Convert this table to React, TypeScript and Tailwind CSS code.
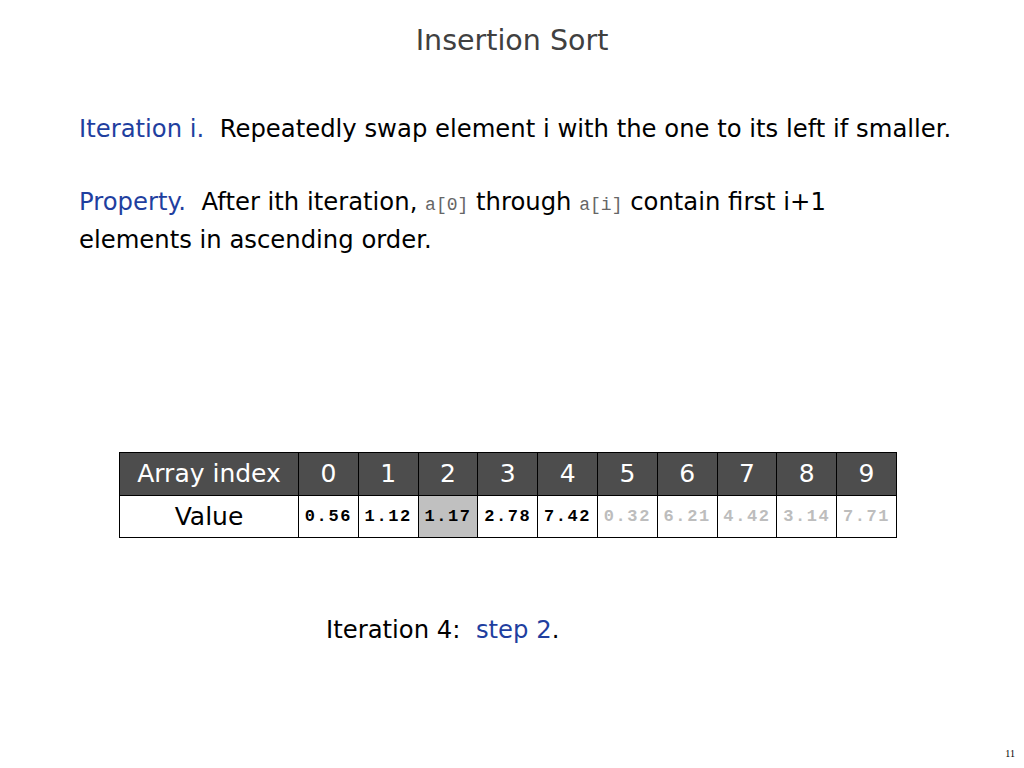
import React from "react";

const vals = [
  { v: "0.56", c: "text-black", bg: "bg-white" },
  { v: "1.12", c: "text-black", bg: "bg-white" },
  { v: "1.17", c: "text-black", bg: "bg-[#c0c0c0]" },
  { v: "2.78", c: "text-black", bg: "bg-white" },
  { v: "7.42", c: "text-black", bg: "bg-white" },
  { v: "0.32", c: "text-[#bdbdbd]", bg: "bg-white" },
  { v: "6.21", c: "text-[#bdbdbd]", bg: "bg-white" },
  { v: "4.42", c: "text-[#bdbdbd]", bg: "bg-white" },
  { v: "3.14", c: "text-[#bdbdbd]", bg: "bg-white" },
  { v: "7.71", c: "text-[#bdbdbd]", bg: "bg-white" },
];

const sans = "font-['DejaVu_Sans',sans-serif]";
const mono = "font-['Liberation_Mono',monospace]";

export default function App() {
  return (
    <div className={`w-[1024px] h-[768px] bg-white relative ${sans} flex flex-col`}>
      <div className="pt-[22px] text-center text-[28.5px] leading-[38px] text-[#404040]">Insertion Sort</div>
      <div className="pl-[79px] pt-[50px] text-[24.3px] leading-[38px] text-black">
        <div>
          <span className="text-[#1f3f9f]">Iteration i.</span>&nbsp; Repeatedly swap element i with the one to its left if smaller.
        </div>
        <div className="mt-[35px]">
          <span className="text-[#1f3f9f]">Property.</span>&nbsp; After ith iteration,{" "}
          <span className={`${mono} text-[18px] leading-none text-[#666]`}>a[0]</span> through{" "}
          <span className={`${mono} text-[18px] leading-none text-[#666]`}>a[i]</span> contain first i+1
          <br />
          elements in ascending order.
        </div>
      </div>
      <div className="ml-[119px] mt-[193px] w-[778px] border border-black">
        <div className="flex h-[43px] bg-[#4d4d4d] text-white text-[25px] border-b border-black">
          <div className="w-[179px] flex items-center justify-center border-r border-black">Array index</div>
          {Array.from({ length: 10 }).map((_, i) => (
            <div
              key={i}
              className={`flex-1 flex items-center justify-center ${i < 9 ? "border-r border-black" : ""}`}
            >
              {i}
            </div>
          ))}
        </div>
        <div className="flex h-[41px] text-[25px]">
          <div className="w-[179px] flex items-center justify-center border-r border-black">Value</div>
          {vals.map((x, i) => (
            <div
              key={i}
              className={`flex-1 flex items-center justify-center ${x.bg} ${x.c} ${mono} font-bold text-[17px] tracking-[1.6px] ${i < 9 ? "border-r border-black" : ""}`}
            >
              {x.v}
            </div>
          ))}
        </div>
      </div>
      <div className="ml-[326px] mt-[73px] text-[24.3px] leading-[38px]">
        Iteration 4:&nbsp; <span className="text-[#1f3f9f]">step 2</span>.
      </div>
      <div className="absolute right-[9px] bottom-[7px] text-[10px] font-['Liberation_Serif',serif]">11</div>
    </div>
  );
}
